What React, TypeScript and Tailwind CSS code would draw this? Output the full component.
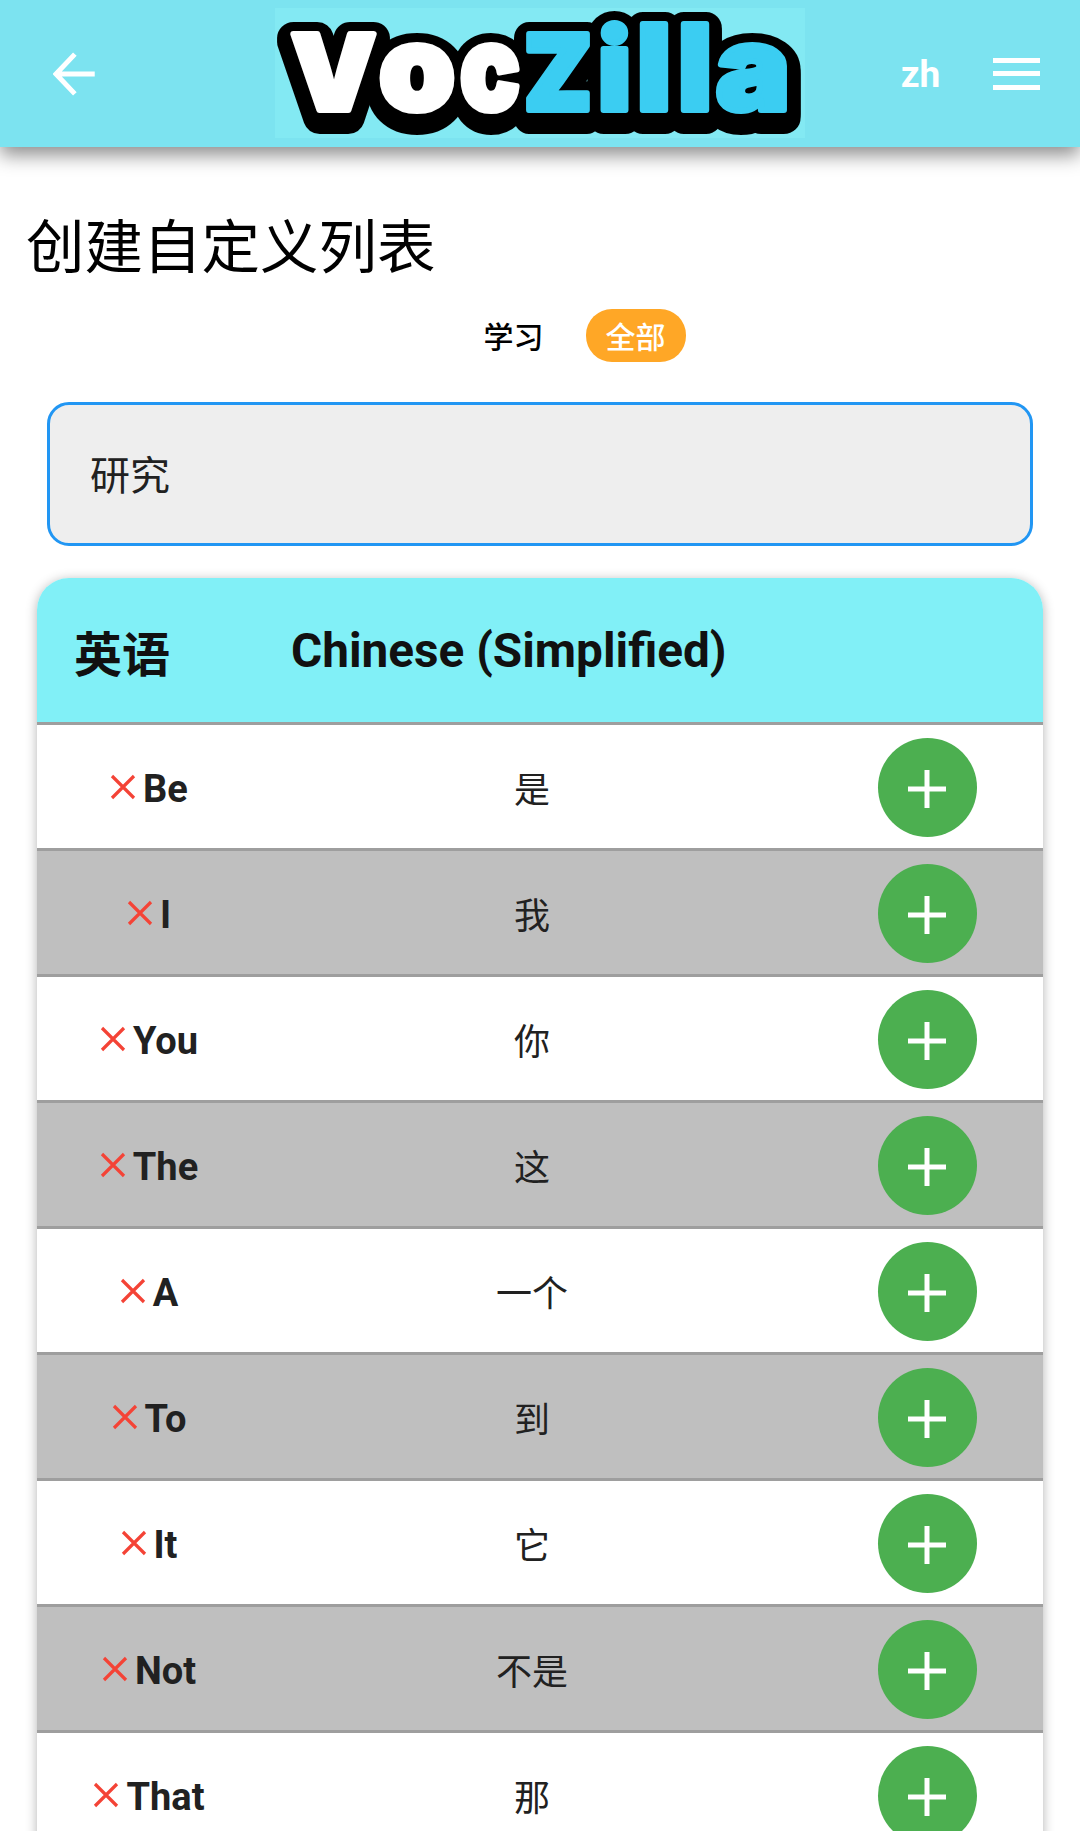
const rows: [string, string, number][] = [
  ["Be", "是", 0],
  ["I", "我", 1],
  ["You", "你", 0],
  ["The", "这", 1],
  ["A", "一个", 0],
  ["To", "到", 1],
  ["It", "它", 0],
  ["Not", "不是", 1],
  ["That", "那", 0],
];

const font = "font-['Roboto','Noto_Sans_CJK_SC',sans-serif]";

const WHITE = "#ffffff";
const BLUE = "#3bcdf2";
const letters: [string, number, number, number, string][] = [
  ["V", 291, 85, 105, WHITE],
  ["o", 379, 76, 118, WHITE],
  ["c", 460, 60, 118, WHITE],
  ["Z", 524, 68, 105, BLUE],
  ["i", 598, 33, 112, BLUE],
  ["l", 637, 34, 118, BLUE],
  ["l", 678, 34, 118, BLUE],
  ["a", 716, 74, 118, BLUE],
];

function Logo() {
  const common = {
    fontFamily: "'Inter', sans-serif",
    fontWeight: 900,
    lengthAdjust: "spacingAndGlyphs" as const,
    strokeLinejoin: "round" as const,
  };
  return (
    <svg width="530" height="130" viewBox="275 8 530 130" className="block">
      {[4, 8].map((dy) =>
        letters.map(([c, x, w, s], i) => (
          <text key={`${dy}-${i}`} x={x} y={110 + dy} fontSize={s} textLength={w} fill="#000" stroke="#000" strokeWidth={32} {...common}>
            {c}
          </text>
        ))
      )}
      {letters.map(([c, x, w, s, col], i) => (
        <text key={i} x={x} y={110} fontSize={s} textLength={w} fill={col} stroke={col} strokeWidth={6} {...common}>
          {c}
        </text>
      ))}
    </svg>
  );
}

function Row({ word, zh, grey }: { word: string; zh: string; grey: boolean }) {
  return (
    <div className={`flex h-[126px] items-center border-b-[3px] border-[#9e9e9e] ${grey ? "bg-[#bfbfbf]" : "bg-white"}`}>
      <div className="mt-[1px] flex w-[222px] items-center justify-center gap-[5px]">
        <svg width="30" height="30" viewBox="0 0 30 30" className="shrink-0">
          <path d="M4 4 L26 26 M26 4 L4 26" stroke="#f44336" strokeWidth="3.2" fill="none" />
        </svg>
        <span className="mt-[3px] text-[38px] font-bold leading-none text-[#212121]">{word}</span>
      </div>
      <div className="mt-[8px] flex w-[546px] justify-center text-[36px] leading-none text-[#212121]">{zh}</div>
      <div className="ml-[73px] mt-[2px] flex size-[99px] items-center justify-center rounded-full bg-[#4caf50]">
        <svg width="38" height="38" viewBox="0 0 38 38" className="mt-[3px] mr-[1px]">
          <path d="M19 0 V38 M0 19 H38" stroke="#fff" strokeWidth="5" fill="none" />
        </svg>
      </div>
    </div>
  );
}

export default function App() {
  return (
    <div className={`h-[1831px] w-[1080px] overflow-hidden bg-white ${font}`}>
      <header className="relative z-10 flex h-[147px] items-center justify-between bg-[#7ce3f0] pl-[53px] pr-[40px] shadow-[0_8px_18px_rgba(0,0,0,0.45)]">
        <svg width="42" height="46" viewBox="0 0 42 46">
          <path d="M42 23 H3 M22 3 L3 23 L22 43" stroke="#fff" strokeWidth="5" fill="none" />
        </svg>
        <div className="ml-[180px] mt-[-1px] bg-[#83e9f3]">
          <Logo />
        </div>
        <div className="ml-[96px] mt-[2px] text-[37px] font-bold leading-none text-white">zh</div>
        <div className="ml-[53px] flex h-[32px] w-[47px] flex-col justify-between">
          <div className="h-[5px] bg-white" />
          <div className="h-[5px] bg-white" />
          <div className="h-[5px] bg-white" />
        </div>
      </header>

      <h1 className="ml-[26px] mt-[68px] text-[58.5px] font-normal leading-[66px] text-black">创建自定义列表</h1>

      <div className="mt-[28px] flex h-[53px] items-center justify-center pl-[89px]">
        <span className="mr-[42px] mt-[5px] text-[30px] font-medium leading-none text-black">学习</span>
        <span className="flex h-[53px] w-[100px] items-center justify-center rounded-[26px] bg-[#ffa726] pt-[5px] text-[30px] font-medium leading-none text-white">全部</span>
      </div>

      <div className="mx-[47px] mt-[40px] flex h-[144px] items-center rounded-[22px] border-[3px] border-[#2196f3] bg-[#eeeeee] pl-[40px] pt-[6px] text-[40px] leading-none text-[#212121]">
        研究
      </div>

      <div className="mx-[37px] mt-[32px] overflow-hidden rounded-t-[32px] shadow-[0_2px_12px_rgba(0,0,0,0.3)]">
        <div className="flex h-[147px] items-center border-b-[3px] border-[#9e9e9e] bg-[#81f0f7]">
          <span className="ml-[37px] mt-[12px] text-[48px] font-bold leading-none text-[#111]">英语</span>
          <span className="ml-[121px] mt-[3px] text-[47.7px] font-bold leading-none text-[#111]">Chinese (Simplified)</span>
        </div>
        {rows.map(([w, z, g]) => (
          <Row key={w} word={w} zh={z} grey={g === 1} />
        ))}
      </div>
    </div>
  );
}
